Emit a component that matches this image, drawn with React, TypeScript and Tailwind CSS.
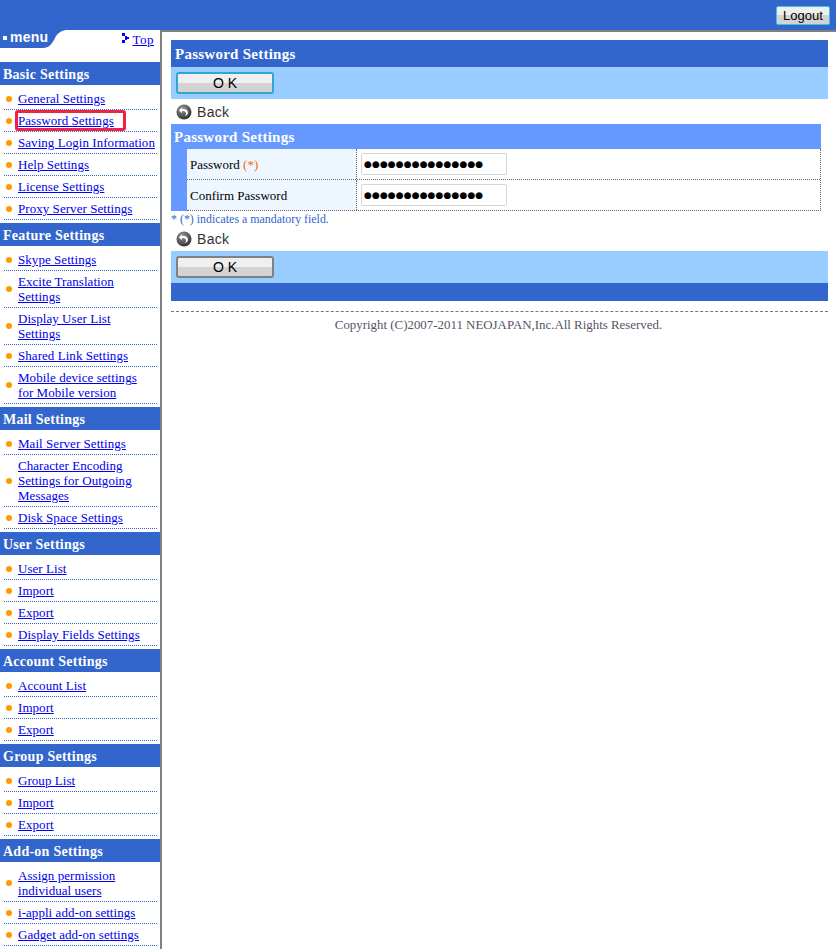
import React from 'react';

type MenuItem = { label: string[]; boxed?: boolean };
type MenuSection = { title: string; items: MenuItem[] };

const sections: MenuSection[] = [
  {
    title: 'Basic Settings',
    items: [
      { label: ['General Settings'] },
      { label: ['Password Settings'], boxed: true },
      { label: ['Saving Login Information'] },
      { label: ['Help Settings'] },
      { label: ['License Settings'] },
      { label: ['Proxy Server Settings'] },
    ],
  },
  {
    title: 'Feature Settings',
    items: [
      { label: ['Skype Settings'] },
      { label: ['Excite Translation', 'Settings'] },
      { label: ['Display User List', 'Settings'] },
      { label: ['Shared Link Settings'] },
      { label: ['Mobile device settings', 'for Mobile version'] },
    ],
  },
  {
    title: 'Mail Settings',
    items: [
      { label: ['Mail Server Settings'] },
      { label: ['Character Encoding', 'Settings for Outgoing', 'Messages'] },
      { label: ['Disk Space Settings'] },
    ],
  },
  {
    title: 'User Settings',
    items: [
      { label: ['User List'] },
      { label: ['Import'] },
      { label: ['Export'] },
      { label: ['Display Fields Settings'] },
    ],
  },
  {
    title: 'Account Settings',
    items: [{ label: ['Account List'] }, { label: ['Import'] }, { label: ['Export'] }],
  },
  {
    title: 'Group Settings',
    items: [{ label: ['Group List'] }, { label: ['Import'] }, { label: ['Export'] }],
  },
  {
    title: 'Add-on Settings',
    items: [
      { label: ['Assign permission', 'individual users'] },
      { label: ['i-appli add-on settings'] },
      { label: ['Gadget add-on settings'] },
    ],
  },
];

const BackIcon = () => (
  <svg width="16" height="16" viewBox="0 0 16 16">
    <defs>
      <radialGradient id="backBall" cx="40%" cy="30%" r="80%">
        <stop offset="0%" stopColor="#9a9a9a" />
        <stop offset="100%" stopColor="#222222" />
      </radialGradient>
    </defs>
    <circle cx="8" cy="8" r="7.500" fill="url(#backBall)" />
    <path d="M6 3.200 2.800 6.400 6 9V7.200c2.200-.4 3.800.3 4 2.400.1 1-.4 2-1.200 2.600 2.300-.6 3.400-2.200 3.100-4.200C11.600 5.600 9 4.600 6 5.200Z" fill="#ffffff" />
  </svg>
);

const TopIcon = () => (
  <svg width="7" height="10" viewBox="0 0 7 10" shapeRendering="crispEdges">
    <path d="M0 0h3v3H0zM3 3h2v1h2v2H5v1H3zM0 7h3v3H0z" fill="#0000ee" />
  </svg>
);

const OkButton = ({ focused }: { focused?: boolean }) => (
  <button
    className={
      focused
        ? "h-[22px] w-[98px] rounded-[3px] border-2 border-[#2fa6d6] bg-[linear-gradient(#efefef_0%,#efefef_50%,#d3d3d3_50%,#d3d3d3_100%)] font-['Liberation_Sans',sans-serif] text-[14px] leading-none text-black"
        : "h-[22px] w-[98px] rounded-[3px] border-2 border-[#808080] bg-[linear-gradient(#efefef_0%,#efefef_50%,#d3d3d3_50%,#d3d3d3_100%)] font-['Liberation_Sans',sans-serif] text-[14px] leading-none text-black"
    }
  >
    O K
  </button>
);

const BackRow = () => (
  <div className="flex items-center gap-[5px] pl-[5px] pt-[1px] font-['Liberation_Sans',sans-serif] text-[14px] tracking-[0.3px] text-[#333333]">
    <BackIcon />
    <span className="pt-[1px]">Back</span>
  </div>
);

const PasswordInput = () => (
  <div className="flex h-[22px] w-[146px] items-center overflow-hidden rounded-[2px] border border-[#d5d5dd] bg-white pl-[2px] font-['DejaVu_Sans',sans-serif] text-[9px] leading-none tracking-[0.1px] text-black">
    ●●●●●●●●●●●●●●●
  </div>
);

const Sidebar = () => (
  <aside className="w-[160px] shrink-0 bg-white">
    <div className="relative flex h-[32px] items-start justify-between">
      <svg width="68" height="18" viewBox="0 0 68 18" className="absolute left-0 top-0">
        <path d="M0 0h66c-6 1-9 4-11 8-3 6-6 10-12 10H0Z" fill="#3366cc" />
      </svg>
      <span className="relative ml-[3px] flex items-center gap-[3px] font-['Liberation_Sans',sans-serif] text-[14px] font-bold leading-[15px] tracking-[0.25px] text-white">
        <span className="size-[4px] bg-white" />
        menu
      </span>
      <a className="relative mr-[6px] mt-[2px] flex items-start gap-[3px] text-[13px] leading-[15px] text-[#0000ee]">
        <span className="pt-[1px]">
          <TopIcon />
        </span>
        <span className="tracking-[0.5px] underline">Top</span>
      </a>
    </div>
    {sections.map((section) => (
      <section key={section.title} className="mb-[3px]">
        <h2 className="h-[23px] bg-[#3366cc] pl-[3px] text-[14px] font-bold leading-[25px] tracking-[0.25px] text-white">
          {section.title}
        </h2>
        <ul className="pt-[3px]">
          {section.items.map((item, i) => (
            <li
              key={i}
              className="ml-[4px] mr-[3px] flex items-center border-b border-dotted border-[#3366cc] py-[3px] pl-[2px]"
            >
              <span className="mr-[6px] size-[6px] shrink-0 rounded-full bg-[#ff9900]" />
              <a className="relative text-[13px] leading-[15px] tracking-[0.05px] text-[#0000ee] underline">
                {item.label.map((line) => (
                  <span key={line} className="block whitespace-nowrap">
                    {line}
                  </span>
                ))}
                {item.boxed && (
                  <span className="absolute -bottom-[3px] -left-[3px] -right-[12px] -top-[3px] rounded-[3px] border-[3px] border-[#ee2244]" />
                )}
              </a>
            </li>
          ))}
        </ul>
      </section>
    ))}
  </aside>
);

const Main = () => (
  <main className="min-w-0 flex-1 border-l-2 border-t-2 border-[#808080] pl-[9px] pr-[8px] pt-[8px]">
    <h1 className="h-[27px] bg-[#3366cc] pl-[4px] text-[15px] font-bold leading-[28px] tracking-[0.25px] text-white">
      Password Settings
    </h1>
    <div className="flex h-[32px] items-center bg-[#99ccff] pl-[5px]">
      <OkButton focused />
    </div>
    <div className="flex h-[25px] items-center">
      <BackRow />
    </div>
    <div className="w-[650px] bg-[#6699ff]">
      <h2 className="h-[25px] pl-[3px] text-[15px] font-bold leading-[26px] tracking-[0.25px] text-white">
        Password Settings
      </h2>
      <div className="ml-[16px] border-b border-r border-dotted border-[#666666] bg-white">
        <div className="flex h-[31px] border-b border-dotted border-[#666666]">
          <div className="flex w-[170px] items-center border-r border-dotted border-[#666666] bg-[#eef7ff] pl-[3px] pt-[2px] text-[13px] text-black">
            Password&nbsp;<span className="text-[#ff6600]">(*)</span>
          </div>
          <div className="flex flex-1 items-center pl-[4px]">
            <PasswordInput />
          </div>
        </div>
        <div className="flex h-[30px]">
          <div className="flex w-[170px] items-center border-r border-dotted border-[#666666] bg-[#eef7ff] pl-[3px] pt-[2px] text-[13px] text-black">
            Confirm Password
          </div>
          <div className="flex flex-1 items-center pl-[4px]">
            <PasswordInput />
          </div>
        </div>
      </div>
    </div>
    <p className="h-[15px] text-[11.900px] leading-[16px] text-[#3366cc]">
      * (*) indicates a mandatory field.
    </p>
    <div className="flex h-[25px] items-center">
      <BackRow />
    </div>
    <div className="flex h-[32px] items-center bg-[#99ccff] pl-[5px]">
      <OkButton />
    </div>
    <div className="h-[18px] bg-[#3366cc]" />
    <div className="mt-[10px] border-t border-dashed border-[#777777] pr-[2px] pt-[5px] text-center text-[12.900px] leading-[16px] text-[#555566]">
      Copyright (C)2007-2011 NEOJAPAN,Inc.All Rights Reserved.
    </div>
  </main>
);

export default function App() {
  return (
    <div className="flex h-[949px] w-[836px] flex-col overflow-hidden bg-white font-['Liberation_Serif',serif]">
      <header className="flex h-[30px] shrink-0 items-start justify-end bg-[#3366cc] pr-[6px] pt-[6px]">
        <button className="h-[19px] w-[54px] rounded-[2px] border border-[#35c6e0] bg-[linear-gradient(#efefef_0%,#efefef_50%,#d3d3d3_50%,#d3d3d3_100%)] font-['Liberation_Sans',sans-serif] text-[13px] leading-none text-black">
          Logout
        </button>
      </header>
      <div className="flex flex-1 overflow-hidden">
        <Sidebar />
        <Main />
      </div>
    </div>
  );
}
